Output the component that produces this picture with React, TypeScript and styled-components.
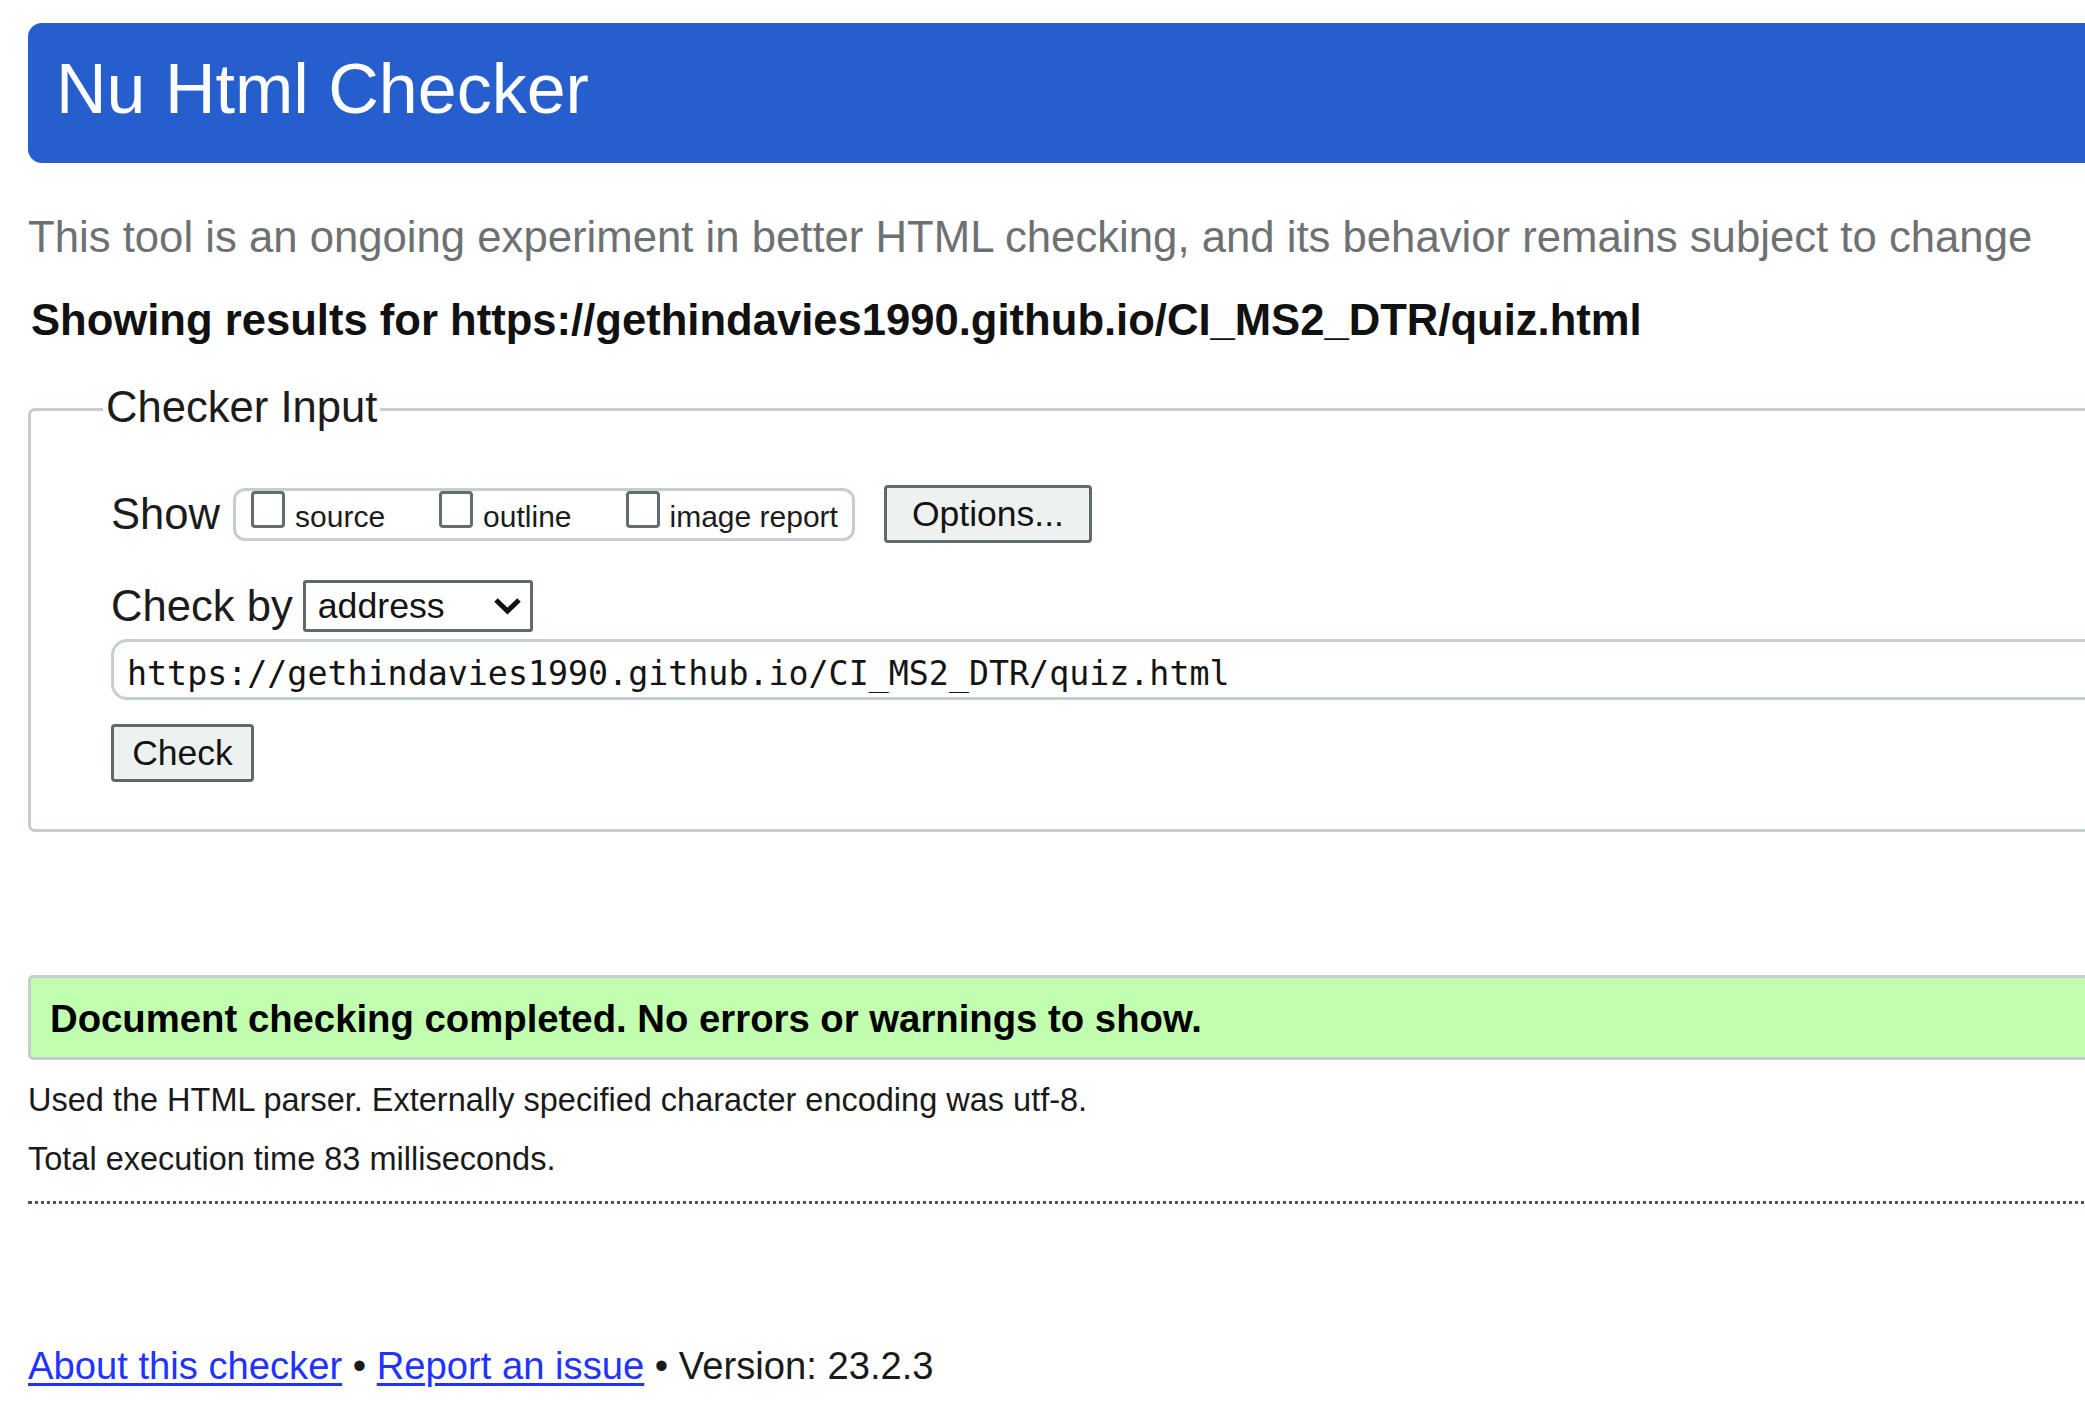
import React from "react";
import styled, { createGlobalStyle } from "styled-components";

const GlobalStyle = createGlobalStyle`
  html, body {
    margin: 0;
    padding: 0;
    overflow: hidden;
    background: #ffffff;
  }
  body {
    font-family: "Liberation Sans", Arial, sans-serif;
    color: #1c1c1c;
  }
  * { box-sizing: border-box; }
`;

const Page = styled.div`
  width: 2200px;
  padding: 23px 0 0 28px;
`;

const Header = styled.header`
  height: 140px;
  background: #265fcd;
  border-radius: 14px 0 0 14px;
  padding: 30px 0 0 28px;
`;

const Title = styled.h1`
  margin: 0;
  font-size: 70px;
  line-height: 72px;
  font-weight: 400;
  color: #ffffff;
`;

const Tagline = styled.p`
  margin: 49px 0 0 0;
  font-size: 43.7px;
  line-height: 50px;
  color: #6e7172;
`;

const Results = styled.h2`
  margin: 33px 0 0 3px;
  font-size: 43.6px;
  line-height: 50px;
  font-weight: 700;
  color: #111111;
`;

const Fieldset = styled.fieldset`
  margin: 37px 0 0 0;
  padding: 48px 0 47px 80px;
  border: 3px solid #c5cfcf;
  border-radius: 7px;
  min-width: 0;
`;

const Legend = styled.legend`
  margin-left: -8px;
  padding: 0 3px 5px 3px;
  font-size: 43.6px;
  line-height: 50px;
  color: #1c1c1c;
`;

const Row = styled.div<{ $top: number }>`
  display: flex;
  align-items: center;
  margin-top: ${(p) => p.$top}px;
`;

const FieldLabel = styled.span<{ $gap: number }>`
  font-size: 43.6px;
  line-height: 50px;
  margin-right: ${(p) => p.$gap}px;
  color: #1c1c1c;
`;

const OptionGroup = styled.div`
  display: flex;
  align-items: flex-start;
  height: 53px;
  padding: 0 14px 0 15px;
  border: 3px solid #c5cfcf;
  border-radius: 12px;
  gap: 54px;
`;

const OptionItem = styled.label`
  display: flex;
  align-items: flex-end;
`;

const Checkbox = styled.input`
  appearance: none;
  margin: 0;
  width: 34px;
  height: 37px;
  border: 3px solid #626d6d;
  border-radius: 4px;
  background: #ffffff;
`;

const OptionLabel = styled.span`
  margin: 0 0 -4px 10px;
  font-size: 30px;
  line-height: 30px;
  color: #1c1c1c;
`;

const Button = styled.button<{ $width: number; $gap?: number }>`
  width: ${(p) => p.$width}px;
  height: 58px;
  margin-left: ${(p) => p.$gap ?? 0}px;
  padding: 0;
  border: 3px solid #5f6b6b;
  border-radius: 4px;
  background: #edf1ef;
  font-family: "Liberation Sans", Arial, sans-serif;
  font-size: 35.5px;
  line-height: 36px;
  color: #141414;
  text-align: center;
`;

const SelectWrap = styled.div`
  position: relative;
  width: 230px;
  height: 52px;
`;

const Select = styled.select`
  appearance: none;
  width: 100%;
  height: 100%;
  margin: 0;
  padding: 0 0 0 12px;
  border: 3px solid #5f6b6b;
  border-radius: 3px;
  background: #ffffff;
  font-family: "Liberation Sans", Arial, sans-serif;
  font-size: 35.7px;
  color: #141414;
`;

const Chevron = styled.svg`
  position: absolute;
  right: 11px;
  top: 17px;
  pointer-events: none;
`;

const UrlInput = styled.input`
  display: block;
  width: 100%;
  height: 61px;
  margin: 7px 0 0 0;
  padding: 8px 13px 0 13px;
  border: 3px solid #c5cfcf;
  border-radius: 16px 0 0 16px;
  font-family: "DejaVu Sans Mono", "Liberation Mono", monospace;
  font-size: 33.3px;
  color: #141414;
  background: #ffffff;
  outline: none;
`;

const Notice = styled.div`
  margin-top: 143px;
  padding: 19px 0 16px 19px;
  border: 3px solid #c5cdcd;
  border-radius: 5px 0 0 5px;
  background: #c2feb0;
  font-size: 38.3px;
  line-height: 44px;
  font-weight: 700;
  color: #000000;
`;

const Meta = styled.p`
  margin: 21px 0 0 0;
  font-size: 32.5px;
  line-height: 38px;
  color: #1a1a1a;
`;

const Divider = styled.hr`
  margin: 23px 0 0 0;
  border: none;
  border-top: 3px dotted #4a5656;
  height: 0;
`;

const Footer = styled.footer`
  margin-top: 140px;
  font-size: 38.2px;
  line-height: 44px;
  color: #1a1a1a;
`;

const FooterLink = styled.a`
  color: #2233ff;
  text-decoration: underline;
  text-decoration-thickness: 3px;
  text-underline-offset: 4px;
`;

export default function App() {
  return (
    <>
      <GlobalStyle />
      <Page>
        <Header>
          <Title>Nu Html Checker</Title>
        </Header>
        <Tagline>
          This tool is an ongoing experiment in better HTML checking, and its behavior remains subject to change
        </Tagline>
        <Results>Showing results for https://gethindavies1990.github.io/CI_MS2_DTR/quiz.html</Results>
        <Fieldset>
          <Legend>Checker Input</Legend>
          <Row $top={0}>
            <FieldLabel $gap={13}>Show</FieldLabel>
            <OptionGroup>
              <OptionItem>
                <Checkbox type="checkbox" />
                <OptionLabel>source</OptionLabel>
              </OptionItem>
              <OptionItem>
                <Checkbox type="checkbox" />
                <OptionLabel>outline</OptionLabel>
              </OptionItem>
              <OptionItem>
                <Checkbox type="checkbox" />
                <OptionLabel>image report</OptionLabel>
              </OptionItem>
            </OptionGroup>
            <Button type="button" $width={208} $gap={29}>
              Options...
            </Button>
          </Row>
          <Row $top={37}>
            <FieldLabel $gap={10}>Check by</FieldLabel>
            <SelectWrap>
              <Select defaultValue="address">
                <option value="address">address</option>
                <option value="file">file upload</option>
                <option value="text">text input</option>
              </Select>
              <Chevron width="29" height="18" viewBox="0 0 29 18">
                <path d="M3 3 L14.5 14 L26 3" fill="none" stroke="#111111" strokeWidth="5" />
              </Chevron>
            </SelectWrap>
          </Row>
          <UrlInput type="url" readOnly value="https://gethindavies1990.github.io/CI_MS2_DTR/quiz.html" />
          <Row $top={24}>
            <Button type="button" $width={143}>
              Check
            </Button>
          </Row>
        </Fieldset>
        <Notice>Document checking completed. No errors or warnings to show.</Notice>
        <Meta>Used the HTML parser. Externally specified character encoding was utf-8.</Meta>
        <Meta>Total execution time 83 milliseconds.</Meta>
        <Divider />
        <Footer>
          <FooterLink href="#about">About this checker</FooterLink> •{" "}
          <FooterLink href="#issue">Report an issue</FooterLink> • Version: 23.2.3
        </Footer>
      </Page>
    </>
  );
}
